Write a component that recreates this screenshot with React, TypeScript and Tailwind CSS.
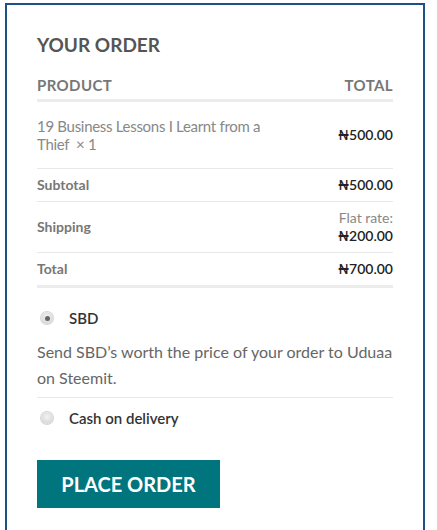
import React from 'react';

type Line = { label: string; value: React.ReactNode; height: string; last?: boolean };

function Radio({ checked }: { checked?: boolean }) {
  return (
    <span className="flex items-center justify-center w-[12px] h-[12px] rounded-full bg-[radial-gradient(circle_at_50%_40%,#f2f2f2,#cfcfcf)] shadow-[0_0_0_1px_#d6d6d6]">
      {checked && <span className="w-[5px] h-[5px] rounded-full bg-[#666]" />}
    </span>
  );
}

function Naira({ amount }: { amount: string }) {
  return <span className="font-semibold text-[#222]">₦{amount}</span>;
}

export default function App() {
  const rows: Line[] = [
    { label: 'Subtotal', value: <Naira amount="500.00" />, height: 'h-[33px]' },
    {
      label: 'Shipping',
      value: (
        <div className="text-right">
          <div className="text-[#888]">Flat rate:</div>
          <Naira amount="200.00" />
        </div>
      ),
      height: 'h-[51px]',
    },
    { label: 'Total', value: <Naira amount="700.00" />, height: 'h-[35px]', last: true },
  ];

  return (
    <div
      className="pt-[3px] pl-[5px] bg-white h-[530px] overflow-hidden"
      style={{ fontFamily: 'Lato, "Open Sans", sans-serif' }}
    >
      <div className="w-[420px] h-[560px] border-2 border-b-0 border-[#1f5084] px-[30px] pt-[28px]">
        <h3 className="text-[19px] leading-[24px] font-bold text-[#555]">YOUR ORDER</h3>

        <div className="mt-[19px] flex justify-between pb-[5px] border-b-[3px] border-[#ececec] text-[15px] leading-[18px] font-bold tracking-[0.4px] text-[#777]">
          <span>PRODUCT</span>
          <span>TOTAL</span>
        </div>

        <div className="flex items-center justify-between h-[67px] border-b border-[#e8e8e8] text-[14px] leading-[18px]">
          <div className="w-[240px] text-[15px] text-[#888] tracking-[-0.3px]">
            19 Business Lessons I Learnt from a Thief{'\u00a0 ×\u00a01'}
          </div>
          <Naira amount="500.00" />
        </div>

        {rows.map((r) => (
          <div
            key={r.label}
            className={`flex items-center justify-between ${r.height} text-[14px] leading-[18px] ${
              r.last ? 'border-b-[3px] border-[#ececec]' : 'border-b border-[#e8e8e8]'
            }`}
          >
            <span className="font-bold text-[#777]">{r.label}</span>
            {r.value}
          </div>
        ))}

        <div className="pt-[21px] pb-[6px] border-b border-[#e8e8e8]">
          <label className="flex items-center gap-[16px] pl-[4px] text-[15px] leading-[18px] font-semibold text-[#333]">
            <Radio checked />
            <span>SBD</span>
          </label>
          <p className="mt-[12px] text-[16px] leading-[26px] text-[#666]">
            Send SBD’s worth the price of your order to Uduaa on Steemit.
          </p>
        </div>

        <label className="flex items-center gap-[16px] pl-[4px] mt-[11px] text-[15px] leading-[18px] font-semibold text-[#333]">
          <Radio />
          <span>Cash on delivery</span>
        </label>

        <button className="mt-[33px] flex items-center justify-center w-[183px] h-[48px] bg-[#01757e] text-white text-[20px] font-bold">
          PLACE ORDER
        </button>
      </div>
    </div>
  );
}
